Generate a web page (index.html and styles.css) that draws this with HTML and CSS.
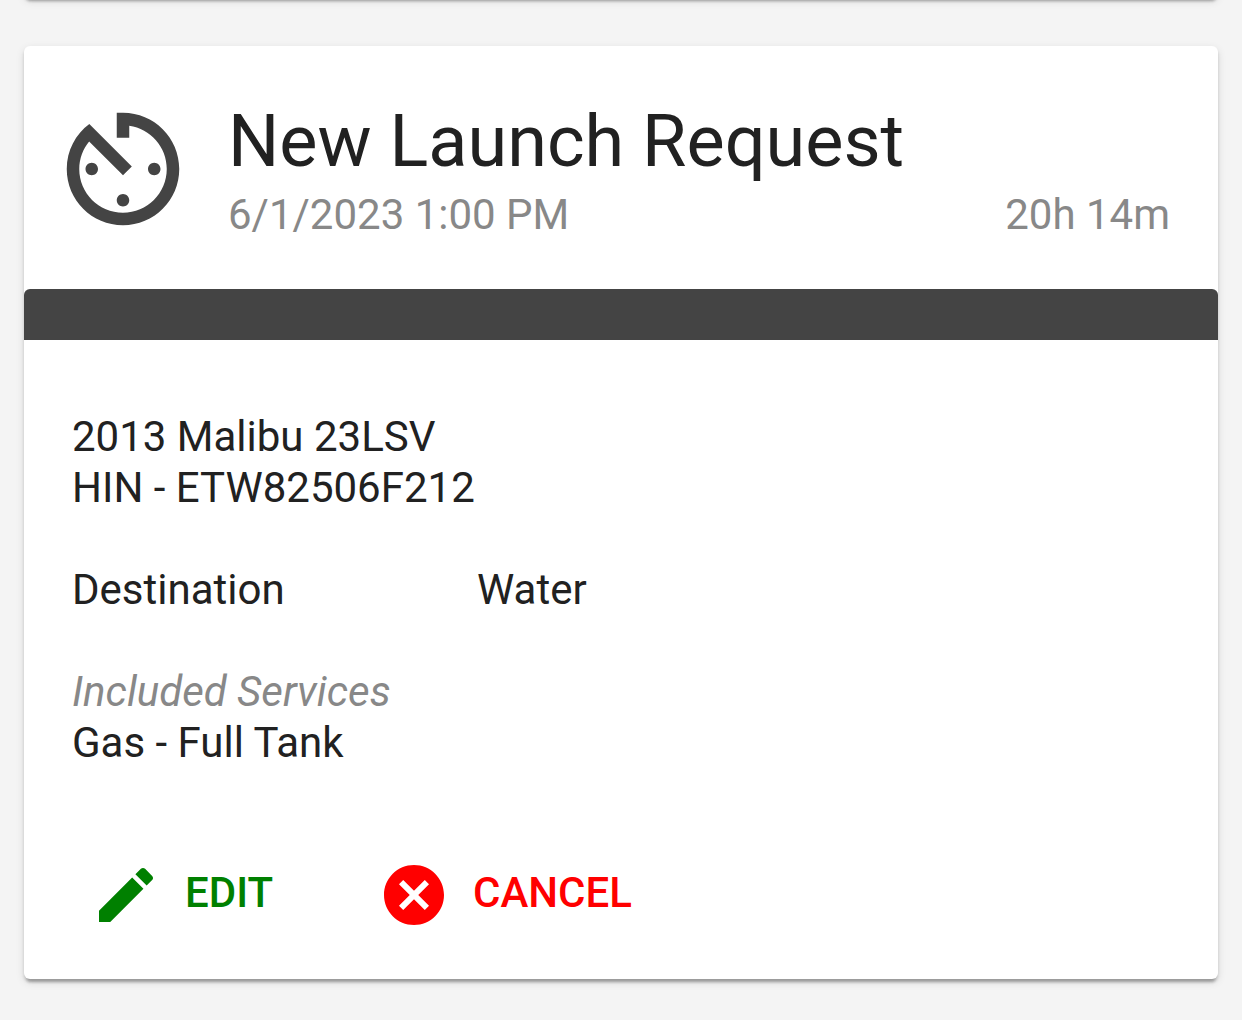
FILE: index.html
```
<!DOCTYPE html>
<html lang="en">

<head>
    <meta charset="UTF-8">
    <meta name="viewport" content="width=device-width, initial-scale=1.0">
    <title>Launch Requests</title>
    <link rel="stylesheet" href="styles.css">
</head>

<body>
    <main class="list">
        <div class="card card-prev"></div>
        <article class="card">
            <header class="card-header">
                <svg class="timer" viewBox="0 0 24 24" aria-hidden="true">
                    <path d="M11 17c0 .55.45 1 1 1s1-.45 1-1-.45-1-1-1-1 .45-1 1zm0-14v4h2V5.08c3.39.49 6 3.39 6 6.92 0 3.87-3.13 7-7 7s-7-3.13-7-7c0-1.68.59-3.22 1.58-4.42L12 13l1.41-1.41-6.8-6.8v.02C4.42 6.45 3 9.05 3 12c0 4.97 4.02 9 9 9 4.97 0 9-4.03 9-9s-4.03-9-9-9h-1zm7 9c0-.55-.45-1-1-1s-1 .45-1 1 .45 1 1 1 1-.45 1-1zM6 12c0 .55.45 1 1 1s1-.45 1-1-.45-1-1-1-1 .45-1 1z"/>
                </svg>
                <div class="heading">
                    <h1 class="title">New Launch Request</h1>
                    <div class="subtitle">
                        <span>6/1/2023 1:00 PM</span>
                        <span>20h 14m</span>
                    </div>
                </div>
            </header>
            <div class="bar"></div>
            <div class="card-body">
                <div>
                    <p>2013 Malibu 23LSV</p>
                    <p>HIN - ETW82506F212</p>
                </div>
                <div class="row">
                    <span>Destination</span>
                    <span>Water</span>
                </div>
                <div>
                    <p class="services">Included Services</p>
                    <p>Gas - Full Tank</p>
                </div>
            </div>
            <div class="actions">
                <button type="button" class="btn edit">
                    <svg class="icon" viewBox="0 0 24 24" aria-hidden="true">
                        <path d="M3 17.25V21h3.75L17.81 9.94l-3.75-3.75L3 17.25zM20.71 7.04c.39-.39.39-1.02 0-1.41l-2.34-2.34c-.39-.39-1.02-.39-1.41 0l-1.83 1.83 3.75 3.75 1.83-1.83z"/>
                    </svg>
                    <span>EDIT</span>
                </button>
                <button type="button" class="btn cancel">
                    <svg class="icon" viewBox="0 0 24 24" aria-hidden="true">
                        <path d="M12 2C6.47 2 2 6.47 2 12s4.47 10 10 10 10-4.47 10-10S17.53 2 12 2zm5 13.59L15.59 17 12 13.41 8.41 17 7 15.59 10.59 12 7 8.41 8.41 7 12 10.59 15.59 7 17 8.41 13.41 12 17 15.59z"/>
                    </svg>
                    <span>CANCEL</span>
                </button>
            </div>
        </article>
    </main>
</body>

</html>
```

FILE: styles.css
```
* {
    margin: 0;
    padding: 0;
    box-sizing: border-box;
}

body {
    background-color: #f4f4f4;
    color: #212121;
    font-family: Roboto, "Liberation Sans", sans-serif;
    font-size: 42px;
    line-height: 51px;
    overflow-x: hidden;
}

.list {
    display: flex;
    flex-direction: column;
    gap: 48px;
    padding: 0 24px 24px;
}

.card {
    background-color: #fff;
    border-radius: 6px;
    box-shadow: 0 6px 3px -3px rgba(0, 0, 0, 0.2), 0 3px 3px 0 rgba(0, 0, 0, 0.14), 0 3px 9px 0 rgba(0, 0, 0, 0.12);
}

/* end of the card scrolled off above */
.card-prev {
    height: 48px;
    margin-top: -50px;
}

.card-header {
    display: flex;
    align-items: flex-start;
    gap: 30px;
    padding: 48px 48px 45px 24px;
}

.timer {
    flex: none;
    width: 150px;
    height: 150px;
    fill: #444;
}

.heading {
    flex: 1;
}

.title {
    font-size: 72px;
    font-weight: 400;
    line-height: 95px;
}

.subtitle {
    display: flex;
    justify-content: space-between;
    color: #888;
}

.bar {
    height: 51px;
    background-color: #444;
    border-radius: 6px 6px 0 0;
}

.card-body {
    display: flex;
    flex-direction: column;
    gap: 51px;
    padding: 71px 48px 73px;
}

.row {
    display: grid;
    grid-template-columns: 405px 1fr;
}

.services {
    color: #888;
    font-style: italic;
}

.actions {
    display: flex;
    gap: 57px;
    padding: 0 42px 30px;
}

.btn {
    display: flex;
    align-items: flex-start;
    gap: 23px;
    padding: 18px 24px;
    border: none;
    background: none;
    font-family: inherit;
    font-size: 42px;
    font-weight: 500;
    line-height: 68px;
    cursor: pointer;
}

.icon {
    width: 72px;
    height: 72px;
    fill: currentColor;
}

.edit {
    color: green;
}

.cancel {
    color: red;
}
```
